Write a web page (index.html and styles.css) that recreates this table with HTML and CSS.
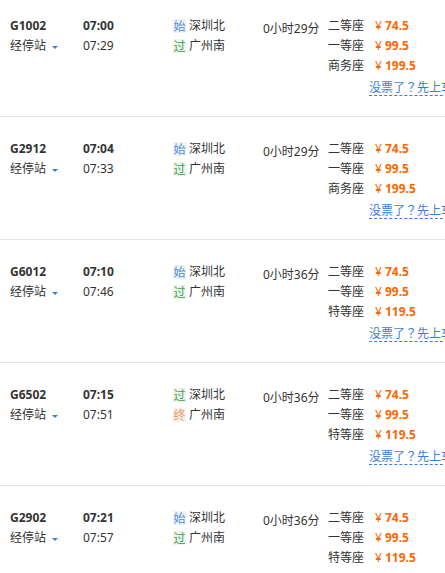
FILE: index.html
```html
<!DOCTYPE html>
<html lang="zh-CN">
<head>
<meta charset="utf-8">
<title>车次列表</title>
<link rel="stylesheet" href="styles.css">
</head>
<body>
<div class="list">
  <div class="train">
    <div class="col-no"><div class="no">G1002</div><div class="stops">经停站<i class="caret"></i></div></div>
    <div class="col-time"><div class="dep">07:00</div><div class="arr">07:29</div></div>
    <div class="col-station"><div><span class="tag start">始</span>深圳北</div><div><span class="tag pass">过</span>广州南</div></div>
    <div class="col-dur">0小时29分</div>
    <div class="col-seat">
      <div class="seat"><span class="sname">二等座</span><span class="price">¥ <b>74.5</b></span></div>
      <div class="seat"><span class="sname">一等座</span><span class="price">¥ <b>99.5</b></span></div>
      <div class="seat"><span class="sname">商务座</span><span class="price">¥ <b>199.5</b></span></div>
      <a class="nobuy">没票了<span class="q" lang="zh-TW">？</span>先上车</a>
    </div>
  </div>
  <div class="train">
    <div class="col-no"><div class="no">G2912</div><div class="stops">经停站<i class="caret"></i></div></div>
    <div class="col-time"><div class="dep">07:04</div><div class="arr">07:33</div></div>
    <div class="col-station"><div><span class="tag start">始</span>深圳北</div><div><span class="tag pass">过</span>广州南</div></div>
    <div class="col-dur">0小时29分</div>
    <div class="col-seat">
      <div class="seat"><span class="sname">二等座</span><span class="price">¥ <b>74.5</b></span></div>
      <div class="seat"><span class="sname">一等座</span><span class="price">¥ <b>99.5</b></span></div>
      <div class="seat"><span class="sname">商务座</span><span class="price">¥ <b>199.5</b></span></div>
      <a class="nobuy">没票了<span class="q" lang="zh-TW">？</span>先上车</a>
    </div>
  </div>
  <div class="train">
    <div class="col-no"><div class="no">G6012</div><div class="stops">经停站<i class="caret"></i></div></div>
    <div class="col-time"><div class="dep">07:10</div><div class="arr">07:46</div></div>
    <div class="col-station"><div><span class="tag start">始</span>深圳北</div><div><span class="tag pass">过</span>广州南</div></div>
    <div class="col-dur">0小时36分</div>
    <div class="col-seat">
      <div class="seat"><span class="sname">二等座</span><span class="price">¥ <b>74.5</b></span></div>
      <div class="seat"><span class="sname">一等座</span><span class="price">¥ <b>99.5</b></span></div>
      <div class="seat"><span class="sname">特等座</span><span class="price">¥ <b>119.5</b></span></div>
      <a class="nobuy">没票了<span class="q" lang="zh-TW">？</span>先上车</a>
    </div>
  </div>
  <div class="train">
    <div class="col-no"><div class="no">G6502</div><div class="stops">经停站<i class="caret"></i></div></div>
    <div class="col-time"><div class="dep">07:15</div><div class="arr">07:51</div></div>
    <div class="col-station"><div><span class="tag pass">过</span>深圳北</div><div><span class="tag end">终</span>广州南</div></div>
    <div class="col-dur">0小时36分</div>
    <div class="col-seat">
      <div class="seat"><span class="sname">二等座</span><span class="price">¥ <b>74.5</b></span></div>
      <div class="seat"><span class="sname">一等座</span><span class="price">¥ <b>99.5</b></span></div>
      <div class="seat"><span class="sname">特等座</span><span class="price">¥ <b>119.5</b></span></div>
      <a class="nobuy">没票了<span class="q" lang="zh-TW">？</span>先上车</a>
    </div>
  </div>
  <div class="train">
    <div class="col-no"><div class="no">G2902</div><div class="stops">经停站<i class="caret"></i></div></div>
    <div class="col-time"><div class="dep">07:21</div><div class="arr">07:57</div></div>
    <div class="col-station"><div><span class="tag start">始</span>深圳北</div><div><span class="tag pass">过</span>广州南</div></div>
    <div class="col-dur">0小时36分</div>
    <div class="col-seat">
      <div class="seat"><span class="sname">二等座</span><span class="price">¥ <b>74.5</b></span></div>
      <div class="seat"><span class="sname">一等座</span><span class="price">¥ <b>99.5</b></span></div>
      <div class="seat"><span class="sname">特等座</span><span class="price">¥ <b>119.5</b></span></div>
    </div>
  </div>
</div>
</body>
</html>
```
FILE: styles.css
```css
html, body {
  margin: 0;
  padding: 0;
  background: #fff;
  overflow: hidden;
}
body {
  font-family: "Noto Sans", "Noto Sans CJK SC", sans-serif;
  font-size: 12px;
  line-height: 20px;
  color: #333;
}
.list {
  margin-top: -6px;
}
.train {
  box-sizing: border-box;
  height: 123px;
  padding: 22px 0 0 10px;
  border-bottom: 1px solid #e6e6e6;
  display: grid;
  grid-template-columns: 73px 90px 90px 65px 1fr;
  align-items: start;
}
.no, .dep {
  font-weight: bold;
}
.stops {
  display: flex;
  align-items: center;
}
.caret {
  display: inline-block;
  width: 0;
  height: 0;
  margin-left: 6px;
  margin-top: 2px;
  border-left: 3px solid transparent;
  border-right: 3px solid transparent;
  border-top: 3px solid #3b7ddd;
}
.col-station div {
  display: flex;
  align-items: center;
}
.tag {
  display: inline-block;
  width: 13px;
  height: 14px;
  line-height: 14px;
  font-size: 12px;
  text-align: center;
  background: #f2f2f2;
  margin-right: 3px;
  font-family: "Noto Sans CJK SC", sans-serif;
}
.tag.start { color: #4a8fe0; }
.tag.pass { color: #2eaa3c; }
.tag.end { color: #f39a55; }
.col-dur {
  padding-top: 3px;
}
.col-seat {
  white-space: nowrap;
}
.seat {
  display: flex;
}
.sname {
  width: 47px;
}
.price {
  color: #ff6600;
}
.price b {
  font-weight: bold;
}
.nobuy {
  display: inline-block;
  margin: 2px 0 0 41px;
  line-height: 17px;
  font-family: "Noto Sans CJK SC", sans-serif;
  color: #3b7ddd;
  border-bottom: 1px dashed #3b7ddd;
  white-space: nowrap;
}
.nobuy .q {
  font-family: "Noto Sans CJK TC", sans-serif;
}
```
